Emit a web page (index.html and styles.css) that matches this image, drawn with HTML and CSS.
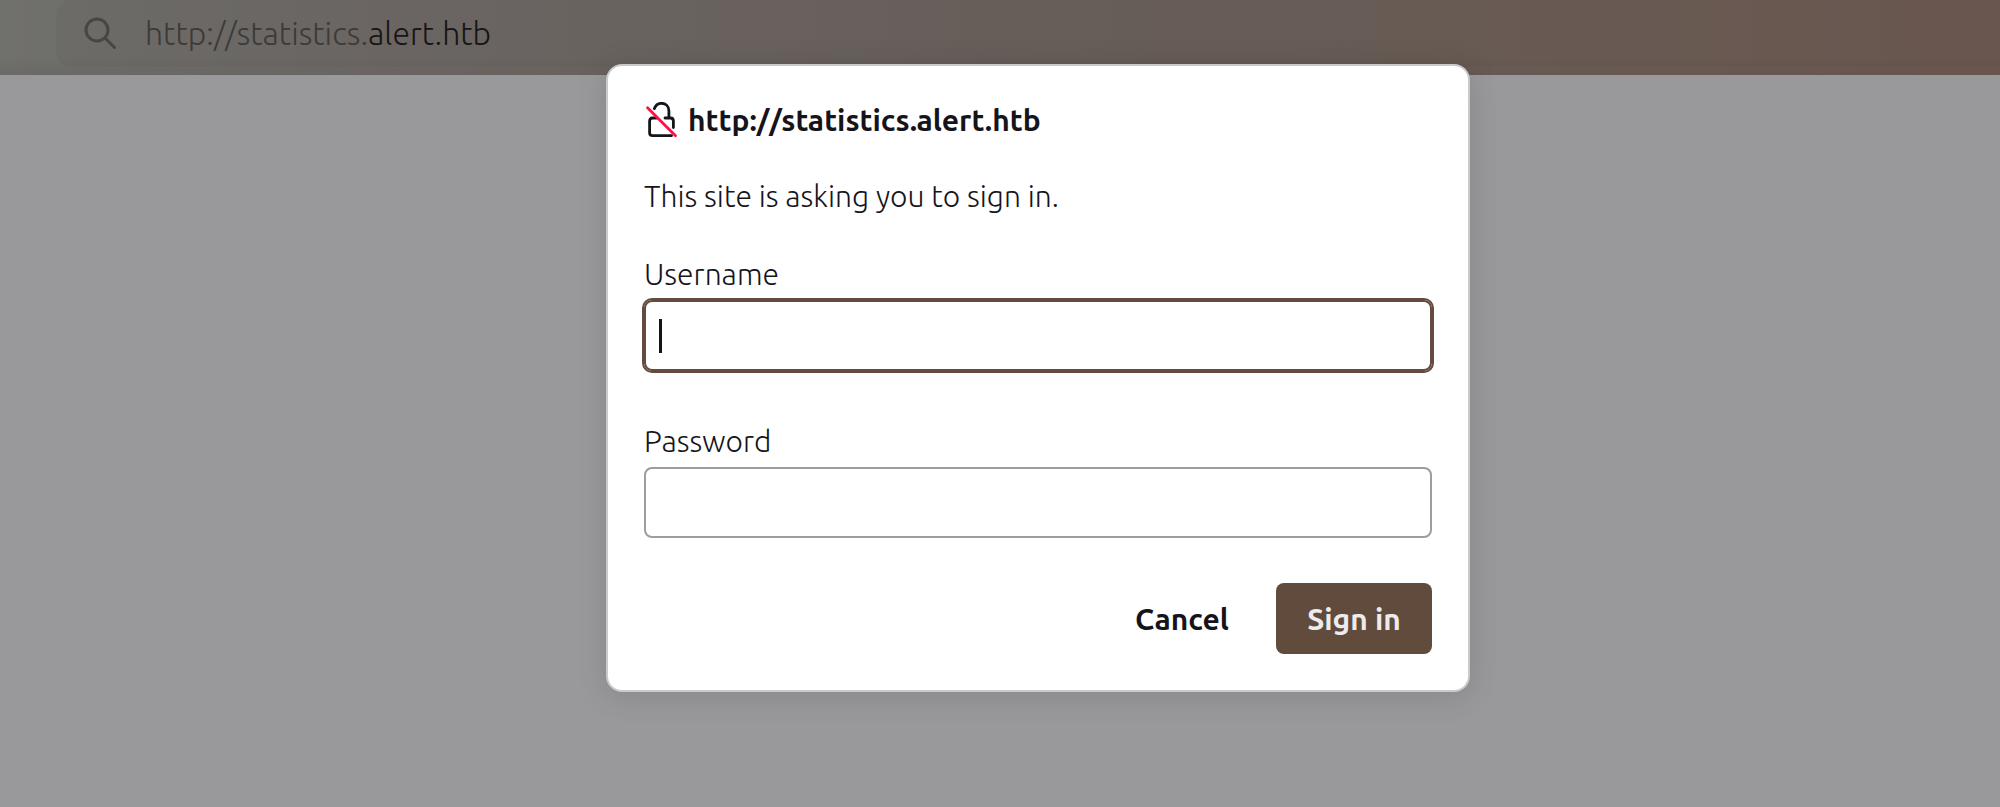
FILE: index.html
```html
<!DOCTYPE html>
<html lang="en">
<head>
<meta charset="utf-8">
<title>Sign in</title>
<link rel="stylesheet" href="styles.css">
</head>
<body>
<header class="toolbar">
  <div class="urlbar">
    <svg class="search-icon" viewBox="0 0 36 36" aria-hidden="true"><circle cx="15" cy="15" r="11"/><path d="M23 23 32.500 32.500"/></svg>
    <div class="address">http://statistics.<span class="domain">alert.htb</span></div>
  </div>
</header>
<main class="page">
  <form class="dialog" role="dialog" aria-labelledby="origin">
    <div class="heading">
      <svg class="lock-icon" viewBox="0 0 36 36" aria-hidden="true">
        <path class="lock" d="M10.400 6.600C11.600 3.300 14.200 1.300 17.400 1.300 21.800 1.300 24.900 4.400 24.900 8.800V16M21 16H26.400Q29.400 16 29.400 19V25.500M13 16H8.600Q5.600 16 5.600 19V30.700Q5.600 33.700 8.600 33.700H27.500"/>
        <path class="slash" d="M3.500 5.700 31.500 33.700"/>
      </svg>
      <h1 class="origin" id="origin">http://statistics.alert.htb</h1>
    </div>
    <p class="message">This site is asking you to sign in.</p>
    <div class="field">
      <label for="username">Username</label>
      <div class="control">
        <input class="active" id="username" type="text">
        <span class="caret"></span>
      </div>
    </div>
    <div class="field">
      <label for="password">Password</label>
      <input id="password" type="password">
    </div>
    <div class="actions">
      <button class="cancel" type="button">Cancel</button>
      <button class="primary" type="submit">Sign in</button>
    </div>
  </form>
</main>
</body>
</html>
```
FILE: styles.css
```css
* { box-sizing: border-box; }
body {
  margin: 0;
  min-height: 100vh;
  background: #99999b;
  color: #15141a;
  font: 300 30px/36px Ubuntu, "Open Sans", "Noto Sans", sans-serif;
}
.toolbar {
  height: 75px;
  padding: 0 0 8px 56px;
  background:
    linear-gradient(transparent 75%, rgba(40, 30, 20, 0.08)),
    linear-gradient(90deg, #70706d, #6e6967 20%, #6b615e 50%, #6c5d56 80%, #6d5951);
}
.urlbar {
  display: flex;
  align-items: center;
  gap: 27px;
  height: 67px;
  padding: 0 0 2px 26px;
  border-radius: 16px 0 0 16px;
  background: rgba(50, 50, 40, 0.06);
}
.search-icon {
  width: 36px;
  height: 36px;
  fill: none;
  stroke: #484643;
  stroke-width: 3;
  stroke-linecap: round;
}
.address { font-size: 32px; color: #3d3a38; }
.domain { color: #161514; }
.page {
  display: flex;
  justify-content: center;
  padding-left: 76px;
}
.dialog {
  width: 864px;
  max-width: 100%;
  margin-top: -11px;
  padding: 36px;
  border: 2px solid #cacacc;
  border-radius: 16px;
  background: #fff;
  box-shadow: 0 4px 32px rgba(0, 0, 0, 0.12);
}
.heading { display: flex; align-items: center; gap: 8px; }
.lock-icon { width: 36px; height: 36px; fill: none; }
.lock { stroke: #15141a; stroke-width: 2.8; stroke-linejoin: round; stroke-linecap: round; }
.slash { stroke: #ff1144; stroke-width: 2.8; stroke-linecap: round; }
.origin { margin: 0; font-size: 30px; font-weight: 600; line-height: 36px; }
.message { margin: 40px 0 42px; }
.field { display: flex; flex-direction: column; gap: 8px; }
.field + .field { margin-top: 52px; }
.control { position: relative; }
input {
  display: block;
  width: 100%;
  height: 71px;
  padding: 0 14px;
  border: 2px solid #9d9d9f;
  border-radius: 8px;
  background: #fff;
  color: inherit;
  font: inherit;
}
.active {
  border-color: #634c3d;
  outline: 2px solid #634c3d;
}
.caret {
  position: absolute;
  top: 19px;
  left: 15px;
  width: 3px;
  height: 34px;
  background: #15141a;
}
.actions {
  display: flex;
  justify-content: flex-end;
  gap: 16px;
  margin-top: 45px;
}
button {
  width: 156px;
  height: 71px;
  padding: 0;
  border: 0;
  border-radius: 8px;
  font: inherit;
  font-weight: 600;
}
.cancel { background: transparent; color: #15141a; }
.primary { background: #614b3c; color: #ececec; }
```
